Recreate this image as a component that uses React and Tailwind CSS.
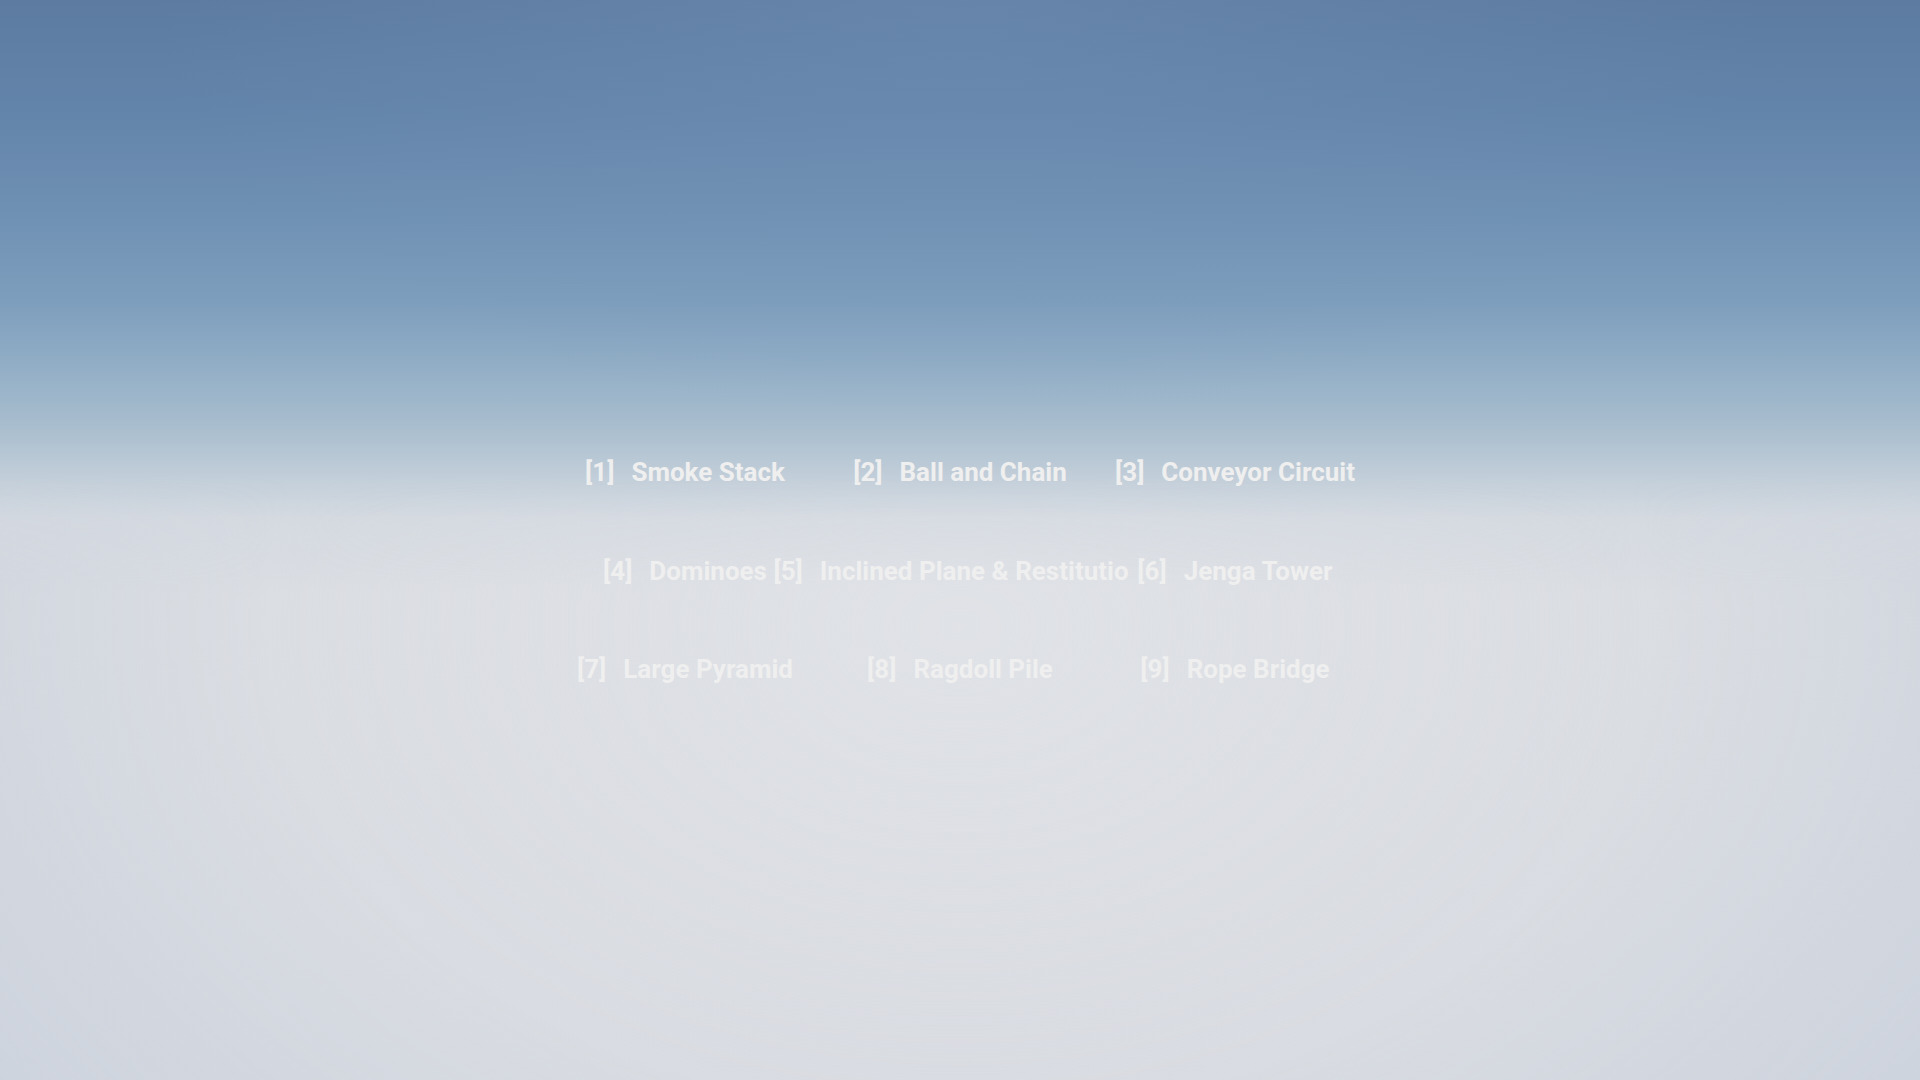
import React from "react";

const levels = [
  [
    { key: "1", name: "Smoke Stack" },
    { key: "2", name: "Ball and Chain" },
    { key: "3", name: "Conveyor Circuit" },
  ],
  [
    { key: "4", name: "Dominoes" },
    { key: "5", name: "Inclined Plane & Restitutio", shift: true },
    { key: "6", name: "Jenga Tower" },
  ],
  [
    { key: "7", name: "Large Pyramid" },
    { key: "8", name: "Ragdoll Pile" },
    { key: "9", name: "Rope Bridge" },
  ],
];

function LevelLabel({ item }) {
  return (
    <div className="flex w-[275px] justify-center">
      <span
        className={
          "shrink-0 whitespace-nowrap text-[26px] font-bold leading-none text-[#efefef] " +
          (item.shift ? "mr-[18px]" : "")
        }
        style={{ fontFamily: "Roboto, 'Liberation Sans', sans-serif" }}
      >
        <span>[{item.key}]</span>
        <span className="ml-[17px]">{item.name}</span>
      </span>
    </div>
  );
}

export default function App() {
  return (
    <div className="relative h-[1080px] w-[1920px] overflow-hidden bg-[linear-gradient(180deg,#5d7ba1_0%,#6384aa_10%,#6f91b3_20%,#7e9ebd_28%,#92aec6_34%,#abbfcf_40%,#c6d1db_45%,#d5dae1_48%,#dbdee3_55%,#d9dce2_100%)]">
      {/* slightly brighter sky near the top centre */}
      <div className="pointer-events-none absolute inset-x-0 top-0 h-[420px] bg-[radial-gradient(ellipse_42%_100%_at_50%_0%,rgba(120,150,185,0.35)_0%,rgba(120,150,185,0)_100%)]" />
      {/* floor: bright pool in the middle, cooler toward the sides */}
      <div className="pointer-events-none absolute inset-0 bg-[radial-gradient(ellipse_60%_75%_at_50%_58%,rgba(228,230,234,0.55)_0%,rgba(228,230,234,0)_60%,rgba(198,206,218,0.6)_100%)] [mask-image:linear-gradient(180deg,transparent_44%,black_54%)]" />

      <div className="relative flex flex-col items-center pt-[459px]">
        {levels.map((row, i) => (
          <div key={i} className="flex h-[98.5px] items-start">
            {row.map((item) => (
              <LevelLabel key={item.key} item={item} />
            ))}
          </div>
        ))}
      </div>
    </div>
  );
}
